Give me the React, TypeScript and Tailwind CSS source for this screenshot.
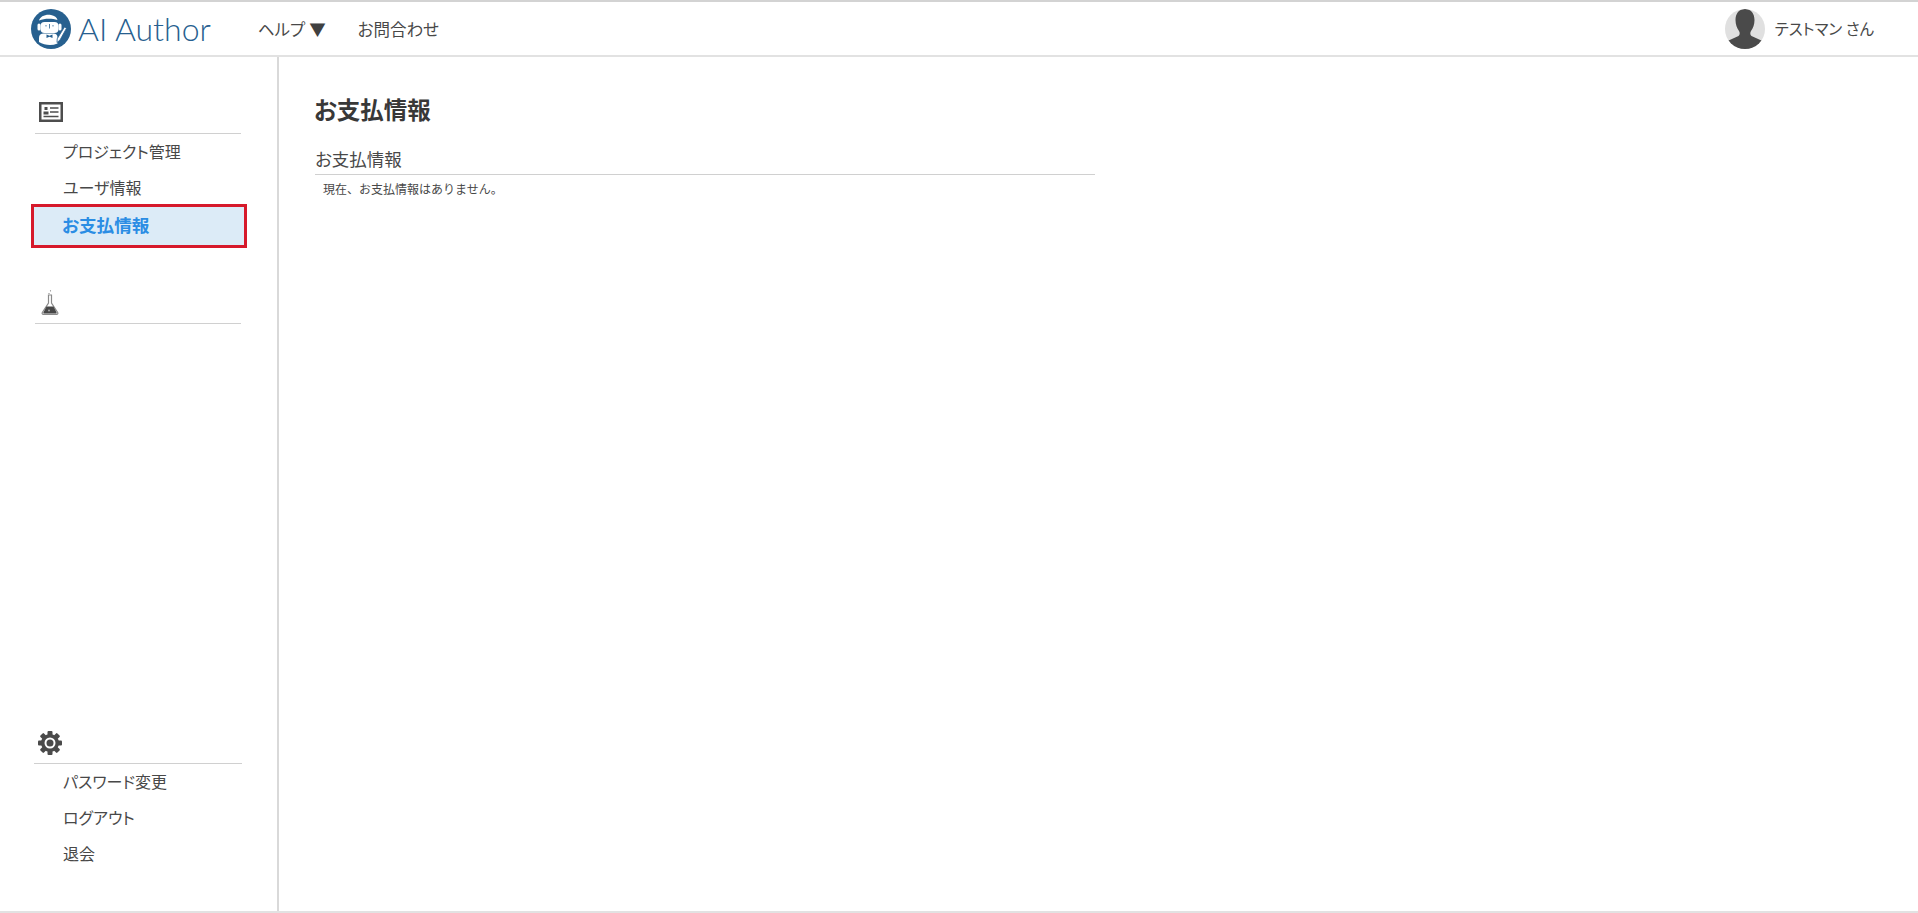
const gearTeeth = [0, 45, 90, 135, 180, 225, 270, 315]

function Logo() {
  return (
    <svg viewBox="0 0 40 40" className="size-[40px] shrink-0">
      <circle cx="20" cy="20" r="20" fill="#27608f" />
      {/* beret */}
      <path d="M8 11.500c1-4 6.500-6.500 12-5.500 3.500.6 6 2.400 6.500 5-5-1.400-12.500-1.900-18.500.5z" fill="#fff" />
      {/* head */}
      <rect x="9.500" y="13" width="18" height="11" rx="4" fill="#fff" />
      <rect x="6.500" y="14.500" width="3" height="7" rx="1.500" fill="#fff" />
      <rect x="27.500" y="14.500" width="3" height="7" rx="1.500" fill="#fff" />
      <path d="M18.500 15v4.500M15 16v1.500M22 16v1.500" stroke="#27608f" strokeWidth="0.800" fill="none" />
      {/* body and bow tie */}
      <path d="M8 33v-4.500c0-2.500 2-4 4.500-4h10c2.500 0 4 1.500 4 4v6c-2.500 1-5 1.500-7.500 1.500-3.700 0-8-1-11-3z" fill="#fff" />
      <path d="M15.500 25.500l3 1.200 3-1.200v3.500l-3-1.200-3 1.200z" fill="#27608f" />
      {/* pen */}
      <path d="M33.500 18l2 1.200-6.500 11.800-3 2.500.2-3.700z" fill="#fff" stroke="#27608f" strokeWidth="0.800" />
    </svg>
  )
}

function CardIcon() {
  return (
    <svg viewBox="0 0 24 20" className="h-[20px] w-[24px]">
      <rect x="1.250" y="1.250" width="21.500" height="17.500" fill="#fff" stroke="#4d4d4d" strokeWidth="2.500" />
      <rect x="5.500" y="5" width="3" height="3" fill="#4d4d4d" />
      <path d="M4.500 12.500v-3h5v3z" fill="#4d4d4d" />
      <path d="M11 6h8.500M11 10h8.500M4.500 14.500h15" stroke="#4d4d4d" strokeWidth="1.500" />
    </svg>
  )
}

function FlaskIcon() {
  return (
    <svg viewBox="0 0 18 25" className="h-[25px] w-[18px]">
      <path d="M7.500 5h3v8l6.200 9.500c.5.900 0 1.800-1 1.800H2.300c-1 0-1.500-.9-1-1.800L7.500 13z" fill="#fff" stroke="#8a8a8a" strokeWidth="1.200" />
      <path d="M5.500 16.500h7l3 5.700c.4.800 0 1.300-.8 1.300h-11.400c-.8 0-1.200-.5-.8-1.300z" fill="#474747" />
      <circle cx="8" cy="3.500" r="0.600" fill="#777" />
      <circle cx="9.500" cy="0.800" r="0.600" fill="#777" />
      <circle cx="8" cy="20.500" r="1" fill="#aaa" />
    </svg>
  )
}

function GearIcon() {
  return (
    <svg viewBox="0 0 24 24" className="size-[24px]">
      {gearTeeth.map((deg) => (
        <rect key={deg} x="9.500" y="0" width="5" height="6" rx="1" fill="#4a4a4a" transform={`rotate(${deg} 12 12)`} />
      ))}
      <circle cx="12" cy="12" r="9" fill="#4a4a4a" />
      <circle cx="12" cy="12" r="5.500" fill="#fff" />
      <circle cx="12" cy="12" r="3.500" fill="#4a4a4a" />
    </svg>
  )
}

function Avatar() {
  return (
    <div className="size-[40px] shrink-0 overflow-hidden rounded-full bg-[#e0e0e0]">
      <svg viewBox="0 0 40 40" className="size-[40px]">
        <path d="M20 0c6 0 9.500 4.500 9.500 11 0 4.500-1.500 8.500-3.500 11-1 1.500-1 4 .5 5l11 5c1.500 1 2.500 2.500 2.500 8H0c0-5.500 1-7 2.500-8l11-5c1.500-1 1.500-3.500.5-5-2-2.500-3.500-6.500-3.500-11C10.500 4.500 14 0 20 0z" fill="#4a4a4a" />
      </svg>
    </div>
  )
}

function Item({ label, active }: { label: string; active?: boolean }) {
  if (active) {
    return (
      <a className="-mb-[2px] -ml-[4px] -mr-[6px] -mt-[2px] flex h-[44px] items-center border-[3px] border-[#d6192b] bg-[#dcebf7] pb-[2px] pl-[28px] text-[17.600px] font-bold text-[#2b8de4]">
        {label}
      </a>
    )
  }
  return <a className="flex h-[36px] items-center pb-[2px] pl-[28px] text-[16px] text-[#484848]">{label}</a>
}

export default function App() {
  return (
    <div className="flex h-[913px] flex-col border-t-2 border-[#d3d3d3] bg-white font-['Noto_Sans_CJK_JP','Noto_Sans',sans-serif] [font-feature-settings:'palt']">
      <header className="flex h-[55px] shrink-0 items-center border-b-2 border-[#e2e2e2] pl-[31px] pr-[44px]">
        <Logo />
        <span className="ml-[7px] font-['Lato',sans-serif] text-[32px] font-light text-[#27608f]">AI Author</span>
        <nav className="ml-[47px] flex items-center gap-[32px] pt-[2px] text-[16.500px] text-[#484848]">
          <span className="flex items-center gap-[4px]">
            ヘルプ <span className="text-[#404040]">▼</span>
          </span>
          <span>お問合わせ</span>
        </nav>
        <div className="ml-auto flex items-center gap-[10px]">
          <Avatar />
          <span className="text-[15.500px] text-[#484848]">テストマン さん</span>
        </div>
      </header>
      <div className="flex min-h-0 flex-1 border-b-2 border-[#e2e2e2]">
        <aside className="flex w-[279px] shrink-0 flex-col justify-between border-r-2 border-[#d9d9d9] pb-[39px] pl-[35px] pr-[36px] pt-[45px]">
          <div>
            <section>
              <div className="border-b border-[#d0d0d0] pb-[11px] pl-[4px]">
                <CardIcon />
              </div>
              <div>
                <Item label="プロジェクト管理" />
                <Item label="ユーザ情報" />
                <Item label="お支払情報" active />
              </div>
            </section>
            <section className="mt-[44px]">
              <div className="border-b border-[#d0d0d0] pb-[8px] pl-[6px]">
                <FlaskIcon />
              </div>
            </section>
          </div>
          <section>
            <div className="-mx-[1px] border-b border-[#d0d0d0] pb-[8px] pl-[4px]">
              <GearIcon />
            </div>
            <div>
              <Item label="パスワード変更" />
              <Item label="ログアウト" />
              <Item label="退会" />
            </div>
          </section>
        </aside>
        <main className="flex-1 pl-[36px] pt-[37px]">
          <h1 className="-ml-[1px] text-[23.500px] font-bold leading-[30px] text-[#383838]">お支払情報</h1>
          <div className="mt-[23px] w-[780px]">
            <h2 className="border-b border-[#d0d0d0] pb-[3px] text-[17.500px] leading-[24px] text-[#484848]">お支払情報</h2>
            <p className="pl-[8px] pt-[5px] text-[12px] leading-[18px] text-[#484848] [font-feature-settings:normal]">現在、お支払情報はありません。</p>
          </div>
        </main>
      </div>
    </div>
  )
}
